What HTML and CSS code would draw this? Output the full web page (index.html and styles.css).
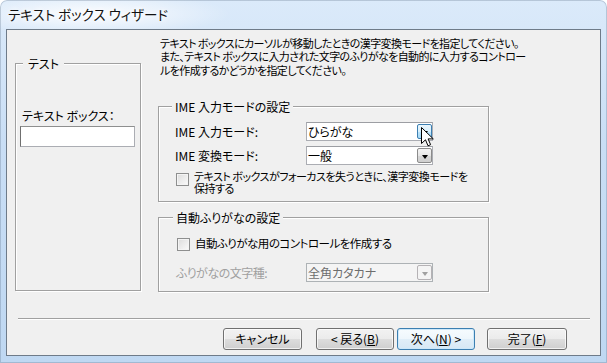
FILE: index.html
```html
<!DOCTYPE html>
<html>
<head>
    <title>テキスト ボックス ウィザード</title>
    <link rel="stylesheet" href="styles.css">
</head>
<body>
    <div class="window">
        <div class="titlebar">
            <span class="title">テキスト ボックス ウィザード</span>
        </div>

        <div class="client">
            <div class="main">
                <!-- preview of the control -->
                <fieldset class="group preview">
                    <legend>テスト</legend>
                    <div class="preview-label">テキスト ボックス：</div>
                    <div class="preview-input"></div>
                </fieldset>

                <div class="settings">
                    <p class="intro">テキスト ボックスにカーソルが移動したときの漢字変換モードを指定してください。<br>また、テキスト ボックスに入力された文字のふりがなを自動的に入力するコントロー<br>ルを作成するかどうかを指定してください。</p>

                    <fieldset class="group ime">
                        <legend>IME 入力モードの設定</legend>
                        <div class="field first">
                            <span class="label">IME 入力モード:</span>
                            <div class="combo">
                                <span class="combo-text">ひらがな</span>
                                <span class="combo-btn hot"><span class="arrow"></span></span>
                            </div>
                        </div>
                        <div class="field">
                            <span class="label">IME 変換モード:</span>
                            <div class="combo">
                                <span class="combo-text">一般</span>
                                <span class="combo-btn"><span class="arrow"></span></span>
                            </div>
                        </div>
                        <div class="check keep">
                            <span class="box"></span>
                            <span class="check-text">テキスト ボックスがフォーカスを失うときに、漢字変換モードを<br>保持する</span>
                        </div>
                    </fieldset>

                    <fieldset class="group furigana">
                        <legend>自動ふりがなの設定</legend>
                        <div class="check auto">
                            <span class="box"></span>
                            <span class="check-text">自動ふりがな用のコントロールを作成する</span>
                        </div>
                        <div class="field kind">
                            <span class="label disabled">ふりがなの文字種:</span>
                            <div class="combo disabled">
                                <span class="combo-text">全角カタカナ</span>
                                <span class="combo-btn"><span class="arrow"></span></span>
                            </div>
                        </div>
                    </fieldset>
                </div>
            </div>

            <div class="separator"></div>

            <div class="buttons">
                <button class="btn btn-cancel">キャンセル</button>
                <button class="btn btn-back">&lt; 戻る(<u>B</u>)</button>
                <button class="btn btn-next default">次へ(<u>N</u>) &gt;</button>
                <button class="btn btn-finish">完了(<u>F</u>)</button>
            </div>
        </div>

        <!-- mouse pointer over the first drop-down -->
        <svg class="cursor" width="13" height="20" viewBox="0 0 13 20">
            <path d="M0.5 0.5 V16.5 L4.5 12.8 L7 18.8 L9.6 17.7 L7.1 11.9 H12.3 Z" fill="#fff" stroke="#000" stroke-width="1" stroke-linejoin="miter"/>
        </svg>
    </div>
</body>
</html>
```

FILE: styles.css
```css
:root {
    --face: #f0f0f0;
    --line: #a0a0a0;
    --text: #000;
    --disabled: #a0a0a0;
    --ui-font: "Noto Sans CJK JP", "Liberation Sans", sans-serif;
}

body {
    margin: 0;
    padding: 0;
    font-family: var(--ui-font);
    font-size: 12px;
    font-feature-settings: "palt";
    color: var(--text);
    background: #fff;
}

.window {
    position: relative;
    width: 607px;
    height: 363px;
    box-sizing: border-box;
    padding: 0 6px 7px 6px;
    display: flex;
    flex-direction: column;
    border-radius: 7px 7px 0 0;
    background:
        radial-gradient(ellipse 140px 22px at 90px 14px, rgba(255,255,255,0.9), rgba(255,255,255,0) 100%),
        linear-gradient(to bottom, #dbeafa 0%, #c9def5 40%, #bfd8f2 100%);
    box-shadow: inset 0 0 0 1px rgba(70, 90, 115, 0.25);
}

.titlebar {
    height: 29px;
    display: flex;
    align-items: center;
    padding-left: 2px;
}

.title {
    font-size: 13.5px;
    color: #111;
    text-shadow: 0 0 6px #fff, 0 0 6px #fff;
    margin-top: -1px;
}

.client {
    flex: 1;
    display: flex;
    flex-direction: column;
    background-color: var(--face);
    border: 1px solid #6e7b89;
}

.main {
    height: 288px;
    display: flex;
    align-items: flex-start;
}

/* group boxes */
.group {
    margin: 0;
    padding: 0 0 0 16px;
    min-width: 0;
    box-sizing: border-box;
    border: 1px solid var(--line);
    box-shadow: inset 1px 1px 0 #fff, 1px 1px 0 #fff;
}

.group legend {
    padding: 0 3px;
    margin-left: -3px;
    line-height: 13px;
    background-color: var(--face);
}

.preview {
    width: 126px;
    height: 234px;
    margin: 27px 0 0 8px;
    padding-left: 4px;
}

.preview legend {
    margin-left: 3px;
    padding: 0 5px;
}

.preview-label {
    margin-top: 39px;
    padding-left: 2px;
    line-height: 13px;
    white-space: nowrap;
}

.preview-input {
    width: 115px;
    height: 21px;
    box-sizing: border-box;
    margin-top: 4px;
    background-color: #fff;
    border: 1px solid #abadb3;
    border-top-color: #8e8f8f;
    border-left-color: #6f6f6f;
}

.settings {
    margin: 7px 0 0 17px;
}

.intro {
    margin: 0 0 0 2px;
    font-size: 11px;
    letter-spacing: -0.6px;
    line-height: 13.3px;
    white-space: nowrap;
}

.ime {
    width: 331px;
    height: 102px;
    margin-top: 23px;
    padding-left: 16px;
}

.furigana {
    width: 331px;
    height: 81px;
    margin-top: 9px;
    padding-left: 17px;
}

.field {
    display: flex;
    align-items: center;
    height: 19px;
    margin-top: 5px;
}

.field.first {
    margin-top: 9px;
}

.field.kind {
    margin-top: 12px;
}

.label {
    width: 131px;
    white-space: nowrap;
}

.furigana .label {
    width: 130px;
    letter-spacing: -0.5px;
}

.label.disabled {
    color: var(--disabled);
}

/* drop-down boxes */
.combo {
    width: 127px;
    height: 19px;
    box-sizing: border-box;
    display: flex;
    align-items: center;
    background-color: #fff;
    border: 1px solid #abadb3;
    border-top-color: #9c9ea3;
}

.combo-text {
    flex: 1;
    padding-left: 1px;
    line-height: 17px;
    white-space: nowrap;
}

.combo-btn {
    width: 15px;
    height: 15px;
    box-sizing: border-box;
    display: flex;
    align-items: center;
    justify-content: center;
    border: 1px solid #8b8b8b;
    border-radius: 2px;
    background: linear-gradient(to bottom, #f4f4f4 0%, #e6e6e6 50%, #d7d7d7 51%, #cfcfcf 100%);
}

.combo-btn.hot {
    border-color: #3c7fb1;
    background: linear-gradient(to bottom, #eaf6fd 0%, #d9f0fc 50%, #bee6fd 51%, #a7d9f5 100%);
}

.arrow {
    width: 0;
    height: 0;
    margin-top: 3px;
    border-left: 3.5px solid transparent;
    border-right: 3.5px solid transparent;
    border-top: 4px solid #000;
}

.combo.disabled {
    background-color: #f4f4f4;
    border-color: #adb2b5;
}

.combo.disabled .combo-text {
    color: #6d6d6d;
}

.combo.disabled .combo-btn {
    border-color: #b5b2b5;
    background: #f4f4f4;
}

.combo.disabled .arrow {
    border-top-color: #a0a0a0;
}

/* check boxes */
.check {
    display: flex;
    align-items: flex-start;
    padding-left: 1px;
}

.check-text {
    font-size: 11px;
    letter-spacing: -0.5px;
    white-space: nowrap;
}

.check.keep {
    margin-top: 5px;
}

.check.keep .check-text {
    line-height: 12px;
}

.check.auto {
    margin-top: 13px;
    line-height: 13px;
}

.check.auto .check-text {
    font-size: 11.5px;
}

.box {
    width: 13px;
    height: 13px;
    box-sizing: border-box;
    flex-shrink: 0;
    margin-right: 5px;
    border: 1px solid #8e8f8f;
    background: linear-gradient(135deg, #dcdcdc 0%, #fbfbfb 100%);
    box-shadow: inset 0 0 0 1px #f4f4f4;
}

.check.keep .box {
    margin-top: 3px;
}

.check.auto .box {
    margin-top: 1px;
}

.separator {
    height: 1px;
    margin: 0 10px 0 11px;
    background-color: var(--line);
    box-shadow: 0 1px 0 #fff;
}

/* dialog buttons */
.buttons {
    display: flex;
    justify-content: flex-end;
    margin: 9px 33px 0 0;
}

.btn {
    width: 79px;
    height: 22px;
    box-sizing: border-box;
    padding: 0;
    font-family: var(--ui-font);
    font-size: 12px;
    font-feature-settings: "palt";
    color: #000;
    line-height: 18px;
    border: 1px solid #707070;
    border-radius: 3px;
    background: linear-gradient(to bottom, #f2f2f2 0%, #ebebeb 50%, #dddddd 51%, #cfcfcf 100%);
    box-shadow: inset 0 0 0 1px rgba(255, 255, 255, 0.7);
}

.btn u {
    text-underline-offset: 1px;
}

.btn.default {
    border-color: #3c7fb1;
    background: linear-gradient(to bottom, #f6fbfe 0%, #eef6fc 50%, #e0eef8 51%, #d6e8f5 100%);
    box-shadow: inset 0 0 0 1px #cde8fa;
}

.btn-back {
    width: 78px;
    margin-left: 14px;
}

.btn-next {
    width: 78px;
    margin-left: 3px;
}

.btn-finish {
    width: 80px;
    margin-left: 12px;
}

.cursor {
    position: absolute;
    left: 421px;
    top: 127px;
}
```
